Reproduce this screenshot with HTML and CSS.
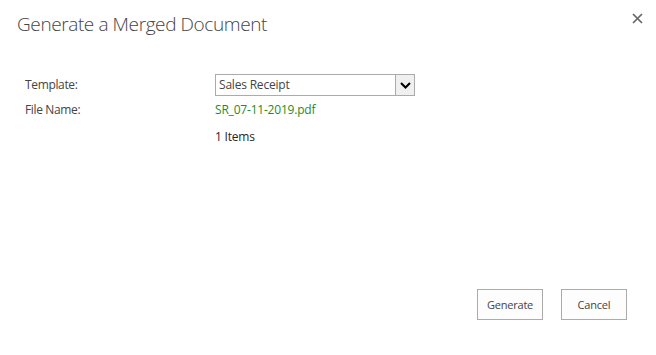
FILE: index.html
```html
<!DOCTYPE html>
<html lang="en">
<head>
  <meta charset="UTF-8">
  <title>Generate a Merged Document</title>
  <link rel="stylesheet" href="styles.css">
</head>
<body>
  <div class="dialog">
    <div class="dialog-header">
      <h1 class="dialog-title">Generate a Merged Document</h1>
      <button class="close-btn" title="Close">
        <svg width="11" height="11" viewBox="0 0 11 11">
          <path d="M1 1 L10 10 M10 1 L1 10" stroke="#666" stroke-width="1.7" fill="none"/>
        </svg>
      </button>
    </div>
    <div class="dialog-body">
      <div class="form-row">
        <label class="form-label">Template:</label>
        <div class="form-field">
          <div class="select-box">
            <span class="select-value">Sales Receipt</span>
            <span class="select-arrow">
              <svg width="11" height="7" viewBox="0 0 11 7">
                <path d="M1 1 L5.5 5.5 L10 1" stroke="#000" stroke-width="2" fill="none"/>
              </svg>
            </span>
          </div>
        </div>
      </div>
      <div class="form-row">
        <label class="form-label">File Name:</label>
        <div class="form-field file-name">SR_07-11-2019.pdf</div>
      </div>
      <div class="form-row">
        <div class="form-label"></div>
        <div class="form-field item-count">1 Items</div>
      </div>
    </div>
    <div class="dialog-footer">
      <button class="action-btn">Generate</button>
      <button class="action-btn">Cancel</button>
    </div>
  </div>
</body>
</html>
```

FILE: styles.css
```css
body {
  margin: 0;
  background: #ffffff;
  font-family: "Open Sans", "Noto Sans", sans-serif;
  color: #444444;
}
.dialog {
  width: 656px;
  height: 355px;
  display: flex;
  flex-direction: column;
}
.dialog-header {
  display: flex;
  justify-content: space-between;
  align-items: flex-start;
  padding: 10px 11px 0 17px;
}
.dialog-title {
  margin: 0;
  font-size: 19px;
  font-weight: 300;
  color: #444444;
  line-height: 29px;
  letter-spacing: -0.4px;
}
.close-btn {
  border: none;
  background: none;
  padding: 2px;
  margin-top: 1px;
  cursor: pointer;
  line-height: 0;
}
.dialog-body {
  padding: 35px 0 0 25px;
  flex: 1;
}
.form-row {
  display: flex;
  align-items: flex-start;
  font-size: 12px;
}
.form-label {
  width: 190px;
  color: #444444;
  line-height: 22px;
  letter-spacing: -0.35px;
}
.form-row + .form-row {
  margin-top: 3px;
}
.form-row:last-child {
  margin-top: 5px;
}
.form-field {
  line-height: 22px;
  letter-spacing: -0.2px;
}
.select-box {
  width: 198px;
  height: 20px;
  border: 1px solid #ababab;
  display: flex;
  align-items: stretch;
  color: #444444;
}
.select-value {
  flex: 1;
  padding-left: 3px;
  line-height: 20px;
}
.select-arrow {
  width: 18px;
  border-left: 1px solid #ababab;
  background: #f0f0f0;
  display: flex;
  align-items: center;
  justify-content: center;
}
.file-name {
  color: #1e8c1e;
}
.item-count {
  color: #262626;
}
.dialog-footer {
  display: flex;
  justify-content: flex-end;
  gap: 18px;
  padding: 0 29px 35px 0;
}
.action-btn {
  width: 66px;
  height: 31px;
  border: 1px solid #ababab;
  background: #fdfdfd;
  font-family: "Open Sans", "Noto Sans", sans-serif;
  font-size: 11px;
  letter-spacing: -0.2px;
  color: #444444;
  padding: 0;
}
```
